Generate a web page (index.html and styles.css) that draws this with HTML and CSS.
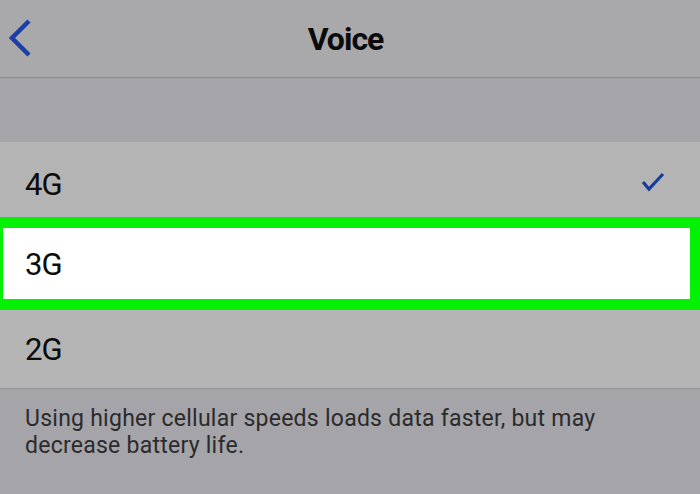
FILE: index.html
```html
<!DOCTYPE html>
<html lang="en">
<head>
  <meta charset="UTF-8">
  <title>Voice</title>
  <meta name="viewport" content="width=device-width, initial-scale=1" />
  <link rel="stylesheet" href="styles.css">
</head>
<body>
  <div class="screen">
    <div class="navbar">
      <div class="back">
        <svg width="26" height="44" viewBox="0 0 26 44">
          <path d="M21 4 L4 21 L21 38" fill="none" stroke="#1c3ea6" stroke-width="4.5" stroke-linecap="butt" stroke-linejoin="miter"/>
        </svg>
      </div>
      <h1 class="title">Voice</h1>
      <div></div>
    </div>

    <div class="spacer"></div>

    <div class="list">
      <div class="row row-first">
        <span>4G</span>
        <svg class="check" width="26" height="20" viewBox="0 0 26 20">
          <path d="M3 10 L9 17 L23 2" fill="none" stroke="#173d9c" stroke-width="3.2"/>
        </svg>
      </div>
      <div class="row selected"><span>3G</span></div>
      <div class="row row-last"><span>2G</span></div>
    </div>

    <p class="note">Using higher cellular speeds loads data faster, but may decrease battery life.</p>
  </div>
</body>
</html>
```

FILE: styles.css
```css
body { margin: 0; background: #a5a4a8; font-family: Roboto, "Liberation Sans", sans-serif; }
.screen { width: 700px; height: 494px; overflow: hidden; display: flex; flex-direction: column; }

.navbar { height: 77px; background: #a9a9ab; border-bottom: 1px solid #8d8d90; display: grid; grid-template-columns: 1fr auto 1fr; align-items: center; }
.back { padding-left: 8px; display: flex; align-items: center; padding-top: 1px; }
.title { margin: 0 9px 0 0; font-size: 32px; font-weight: 700; letter-spacing: -1px; color: #0b0b0b; }

.spacer { height: 64px; background: #a5a4a8; }

.list { background: #b4b4b4; }
.row { display: flex; align-items: center; justify-content: space-between; padding: 0 34px 0 25px; font-size: 31px; letter-spacing: -1px; color: #0c0c0c; }
.row-first { height: 75px; padding-top: 10px; box-sizing: border-box; }
.selected { height: 69px; background: #fff; border-style: solid; border-color: #04f004; border-width: 11px 10px 11px 3px; padding-left: 22px; padding-top: 2px; }
.row-last { height: 78px; border-bottom: 1px solid #969698; }
.check { margin-top: -6px; }

.note { margin: 0; padding: 16px 25px; font-size: 23px; line-height: 27px; letter-spacing: 0.25px; color: #2b2b2d; }
```
